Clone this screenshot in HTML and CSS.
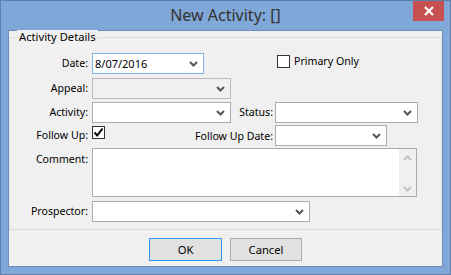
FILE: index.html
```html
<!DOCTYPE html>
<html>
<head>
<meta charset="utf-8">
<link rel="stylesheet" href="styles.css">
</head>
<body>
<div class="window">
  <div class="titlebar">
    <span class="title">New Activity: []</span>
    <div class="close">
      <svg width="12" height="10" viewBox="0 0 12 10"><path d="M2 1 L10 9 M10 1 L2 9" stroke="#fff" stroke-width="2.2" fill="none"/></svg>
    </div>
  </div>
  <div class="client">
    <div class="group">
      <div class="legend">Activity Details</div>
      <div class="row r1">
        <span class="label">Date:</span>
        <div class="combo focus w112"><span class="val">8/07/2016</span><svg class="chev" width="9" height="6" viewBox="0 0 9 6"><path d="M1 1 L4.5 4.5 L8 1" stroke="#555" stroke-width="2" fill="none"/></svg></div>
        <span class="check cb-primary"></span><span class="cbtext">Primary Only</span>
      </div>
      <div class="row r2">
        <span class="label">Appeal:</span>
        <div class="combo disabled w139"><span class="val"></span><svg class="chev" width="9" height="6" viewBox="0 0 9 6"><path d="M1 1 L4.5 4.5 L8 1" stroke="#555" stroke-width="2" fill="none"/></svg></div>
      </div>
      <div class="row r3">
        <span class="label">Activity:</span>
        <div class="combo w139"><span class="val"></span><svg class="chev" width="9" height="6" viewBox="0 0 9 6"><path d="M1 1 L4.5 4.5 L8 1" stroke="#555" stroke-width="2" fill="none"/></svg></div>
        <span class="label2 l-status">Status:</span>
        <div class="combo w143"><span class="val"></span><svg class="chev" width="9" height="6" viewBox="0 0 9 6"><path d="M1 1 L4.5 4.5 L8 1" stroke="#555" stroke-width="2" fill="none"/></svg></div>
      </div>
      <div class="row r4">
        <span class="label">Follow Up:</span>
        <span class="check checked"><svg width="11" height="11" viewBox="0 0 11 11"><path d="M1.5 5.5 L4.2 8.5 L9.5 1.5" stroke="#000" stroke-width="2" fill="none"/></svg></span>
        <span class="label2 l-fud">Follow Up Date:</span>
        <div class="combo w112"><span class="val"></span><svg class="chev" width="9" height="6" viewBox="0 0 9 6"><path d="M1 1 L4.5 4.5 L8 1" stroke="#555" stroke-width="2" fill="none"/></svg></div>
      </div>
      <div class="row r5">
        <span class="label top">Comment:</span>
        <div class="memo">
          <div class="memotext"></div>
          <div class="vscroll">
            <svg width="9" height="6" viewBox="0 0 9 6"><path d="M1 5 L4.5 1.5 L8 5" stroke="#c2c2c2" stroke-width="2" fill="none"/></svg>
            <svg width="9" height="6" viewBox="0 0 9 6"><path d="M1 1 L4.5 4.5 L8 1" stroke="#c2c2c2" stroke-width="2" fill="none"/></svg>
          </div>
        </div>
      </div>
      <div class="row r6">
        <span class="label">Prospector:</span>
        <div class="combo w218"><span class="val"></span><svg class="chev" width="9" height="6" viewBox="0 0 9 6"><path d="M1 1 L4.5 4.5 L8 1" stroke="#555" stroke-width="2" fill="none"/></svg></div>
      </div>
    </div>
    <div class="buttons">
      <div class="btn default">OK</div>
      <div class="btn cancel">Cancel</div>
    </div>
  </div>
</div>
</body>
</html>
```
FILE: styles.css
```css
* { box-sizing: border-box; }
html, body { margin: 0; padding: 0; }
body {
  width: 451px; height: 275px; overflow: hidden;
  font-family: "Noto Sans", "Open Sans", sans-serif;
  font-size: 10.6px; color: #000;
}
.window {
  width: 451px; height: 275px;
  background: #7fa7d7;
  border: 1px solid #5d7fae;
  display: flex; flex-direction: column;
}
.titlebar {
  position: relative;
  height: 29px;
  text-align: center;
  line-height: 28px;
}
.title {
  font-size: 16px;
  color: #333;
  font-family: "Noto Sans", sans-serif;
}
.close {
  position: absolute; top: 0; right: 6px;
  width: 31px; height: 20px;
  background: #c75050;
  display: flex; align-items: center; justify-content: center;
}
.client {
  margin: 0 7px;
  height: 237px;
  background: #f0f0f0;
  border: 1px solid #6d8dbb;
  display: flex; flex-direction: column;
}
.group {
  margin-top: 6px;
  height: 193px;
  border: 1px solid #dcdcdc;
  border-left-color: #e4e4e4; border-right-color: #e4e4e4;
}
.legend {
  width: fit-content;
  margin: -8px 0 0 7px;
  padding: 0 2px;
  line-height: 14px;
  height: 14px;
  background: #f0f0f0;
  font-size: 11.2px;
}
.row { display: flex; align-items: flex-start; height: 21px; }
.r1 { margin-top: 9px; }
.r2 { margin-top: 4px; }
.r3 { margin-top: 3px; }
.r4 { margin-top: 2px; }
.r5 { margin-top: 2px; height: 49px; }
.r6 { margin-top: 4px; }
.label {
  width: 78px; margin-right: 4px;
  text-align: right;
  line-height: 21px; white-space: nowrap;
}
.label.top { line-height: 14px; padding-top: 4px; }
.label2 { text-align: right; line-height: 21px; margin-right: 2px; white-space: nowrap; }
.l-status { width: 42px; }
.l-fud { width: 168px; line-height: 23px; }
.combo {
  height: 21px;
  background: #fff;
  border: 1px solid #acacac;
  display: flex; align-items: center; justify-content: space-between;
  padding: 0 5px 0 2px;
}
.combo.focus { border-color: #7eb4ea; }
.combo.disabled { background: #f0f0f0; border-color: #bcbcbc; }
.combo .val { line-height: 19px; font-size: 11px; }
.chev { margin-top: 1px; }
.w112 { width: 112px; }
.w139 { width: 139px; }
.w143 { width: 143px; }
.w218 { width: 218px; }
.check {
  width: 13px; height: 13px;
  background: #fff;
  border: 1px solid #333;
  display: flex; align-items: center; justify-content: center;
}
.cb-primary { margin: 2px 0 0 73px; }
.cbtext { margin-left: 4px; line-height: 17px; }
.checked { margin-top: 1px; }
.memo {
  width: 325px; height: 49px;
  background: #fff;
  border: 1px solid #acacac;
  display: flex;
}
.memotext { flex: 1; }
.vscroll {
  width: 17px;
  background: #f0f0f0;
  display: flex; flex-direction: column; align-items: center; justify-content: space-between;
  padding: 6px 0 4px;
}
.buttons {
  margin-top: 8px;
  display: flex; justify-content: center; gap: 8px;
}
.btn {
  height: 23px;
  background: #e1e1e1;
  border: 1px solid #adadad;
  text-align: center;
  line-height: 21px;
  font-size: 11.2px;
}
.btn.default { width: 73px; border-color: #3399ff; }
.btn.cancel { width: 72px; }
```
